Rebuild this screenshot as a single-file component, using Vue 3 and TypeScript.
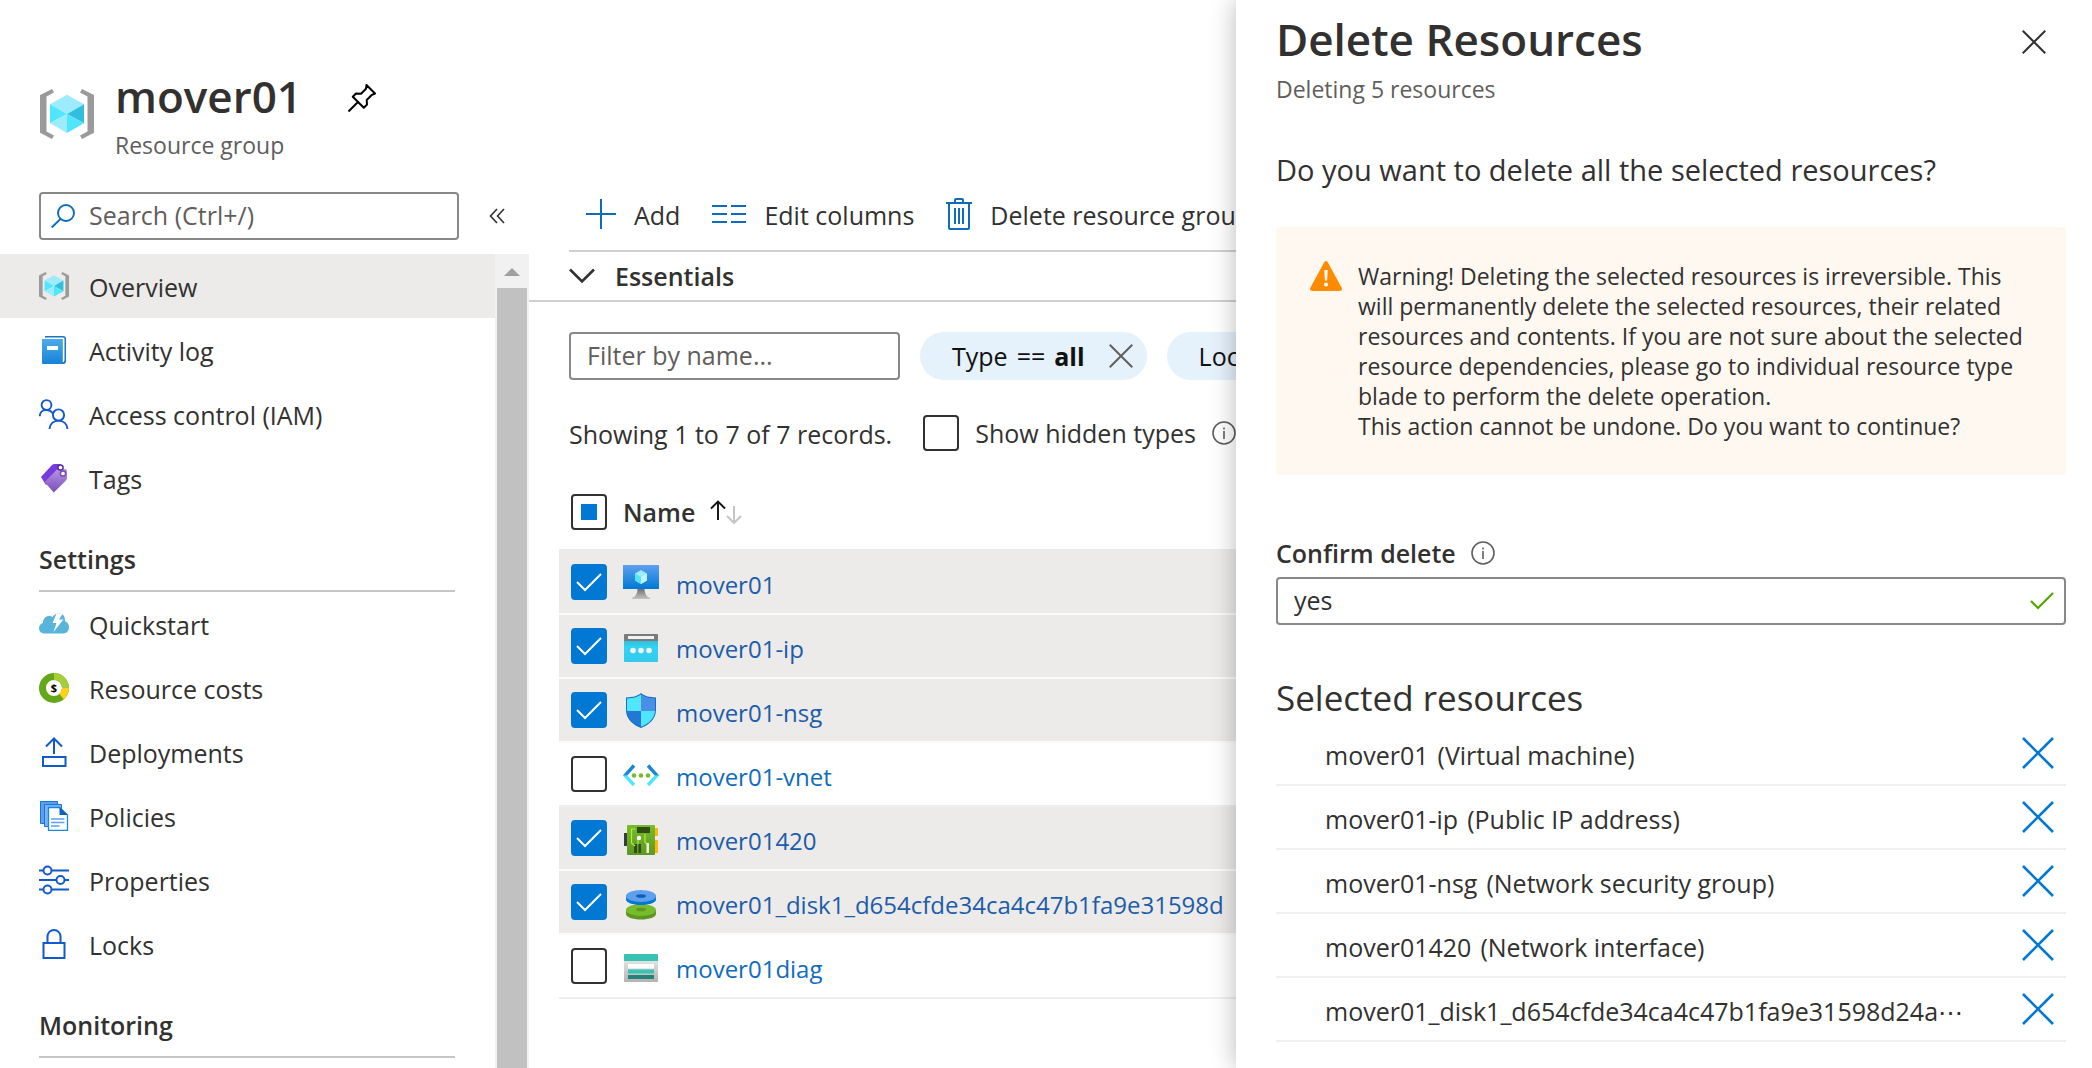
<script setup lang="ts">
import { computed, ref } from 'vue'

interface MenuItem {
  label: string
  icon: string
}

interface MenuGroup {
  title?: string
  items: MenuItem[]
}

interface Resource {
  name: string
  icon: string
  kind: string
  shortName?: string
  checked: boolean
}

const groups: MenuGroup[] = [
  {
    items: [
      { label: 'Overview', icon: 'group' },
      { label: 'Activity log', icon: 'log' },
      { label: 'Access control (IAM)', icon: 'people' },
      { label: 'Tags', icon: 'tags' },
    ],
  },
  {
    title: 'Settings',
    items: [
      { label: 'Quickstart', icon: 'quickstart' },
      { label: 'Resource costs', icon: 'costs' },
      { label: 'Deployments', icon: 'deploy' },
      { label: 'Policies', icon: 'policies' },
      { label: 'Properties', icon: 'properties' },
      { label: 'Locks', icon: 'lock' },
    ],
  },
  { title: 'Monitoring', items: [] },
]

const active = ref('Overview')
const search = ref('')
const filter = ref('')
const showHidden = ref(false)
const confirmation = ref('yes')

const resources = ref<Resource[]>([
  { name: 'mover01', icon: 'vm', kind: '(Virtual machine)', checked: true },
  { name: 'mover01-ip', icon: 'ip', kind: '(Public IP address)', checked: true },
  { name: 'mover01-nsg', icon: 'nsg', kind: '(Network security group)', checked: true },
  { name: 'mover01-vnet', icon: 'vnet', kind: '(Virtual network)', checked: false },
  { name: 'mover01420', icon: 'nic', kind: '(Network interface)', checked: true },
  {
    name: 'mover01_disk1_d654cfde34ca4c47b1fa9e31598d',
    shortName: 'mover01_disk1_d654cfde34ca4c47b1fa9e31598d24a⋯',
    icon: 'disk',
    kind: '',
    checked: true,
  },
  { name: 'mover01diag', icon: 'storage', kind: '(Storage account)', checked: false },
])

const selected = computed(() => resources.value.filter((r) => r.checked))
const allChecked = computed(() => selected.value.length === resources.value.length)
const someChecked = computed(() => selected.value.length > 0 && !allChecked.value)

function toggleAll() {
  const next = !allChecked.value
  resources.value.forEach((r) => (r.checked = next))
}
</script>

<template>
  <svg class="sprite" aria-hidden="true">
    <defs>
      <linearGradient id="g-blue" x1="0" y1="0" x2="0" y2="1">
        <stop offset="0" stop-color="#5ea0ef" />
        <stop offset="1" stop-color="#0078d4" />
      </linearGradient>
      <linearGradient id="g-book" x1="0" y1="0" x2="0" y2="1">
        <stop offset="0" stop-color="#4eaaea" />
        <stop offset="1" stop-color="#1683d8" />
      </linearGradient>
      <linearGradient id="g-tag" x1="0" y1="0" x2="0" y2="1">
        <stop offset="0" stop-color="#b796e6" />
        <stop offset="1" stop-color="#7a4cba" />
      </linearGradient>
      <linearGradient id="g-stand" x1="0" y1="0" x2="0" y2="1">
        <stop offset="0" stop-color="#707070" />
        <stop offset="1" stop-color="#c4c4c4" />
      </linearGradient>
      <linearGradient id="g-cyan" x1="0" y1="0" x2="0" y2="1">
        <stop offset="0" stop-color="#32bedd" />
        <stop offset="0.3" stop-color="#32d4f5" />
        <stop offset="1" stop-color="#35c9ea" />
      </linearGradient>
      <linearGradient id="g-angle" x1="0" y1="0" x2="0" y2="1">
        <stop offset="0.45" stop-color="#1988d9" />
        <stop offset="0.55" stop-color="#50e6ff" />
      </linearGradient>
      <linearGradient id="g-board" x1="0" y1="0" x2="0" y2="1">
        <stop offset="0" stop-color="#76bc2d" />
        <stop offset="1" stop-color="#5e9624" />
      </linearGradient>
      <linearGradient id="g-frame" x1="0" y1="0" x2="0" y2="1">
        <stop offset="0" stop-color="#e4e4e4" />
        <stop offset="1" stop-color="#b3b3b3" />
      </linearGradient>
    </defs>

    <symbol id="i-group" viewBox="0 0 54 50">
      <path fill="#9a9a9a" d="M0 6 12 0l2 3.500L6.500 7.500v35l7.500 4L12 50 0 43.700zM54 6 42 0l-2 3.500 7.500 4v35l-7.500 4L42 50l12-6.300z" />
      <path fill="#9cebff" d="M27 5.700 44 15.300 27 25 10 15.300z" />
      <path fill="#50e6ff" d="M10 15.300 27 25 10 34.300z" />
      <path fill="#9cebff" d="M10 34.300 27 25v19z" />
      <path fill="#32bedd" d="M44 15.300v19L27 25z" />
      <path fill="#50e6ff" d="M27 25l17 9.300L27 44z" />
    </symbol>
    <symbol id="i-log" viewBox="0 0 30 30">
      <path fill="#1b76b8" d="M6 1h18q3 0 3 3v22q0 3-3 3H6z" />
      <path fill="#fff" d="M7 2.500h17q1.500 0 1.500 1.500v21q0 2-2 2.500V4H5q.5-1.500 2-1.500z" />
      <path fill="url(#g-book)" d="M3 4h20.500v23q0 2-2 2H4q-1 0-1-1z" />
      <path fill="#fff" d="M8 11h11v4H8z" />
    </symbol>
    <symbol id="i-people" viewBox="0 0 30 30">
      <g fill="none" stroke="#1259c9" stroke-width="1.900">
        <circle cx="7.500" cy="6" r="4.900" />
        <circle cx="19.500" cy="16" r="5.600" />
        <path d="M.8 17.200C.8 13.500 3.500 11 7 11c2.800 0 5.200 1 7 3.700M10.500 30c.3-5 4-8.400 9-8.400s8.700 3.400 9 8.400" />
      </g>
    </symbol>
    <symbol id="i-tags" viewBox="0 0 30 30">
      <path fill="#773adc" d="M2 14 13 2q1-1 3-1h5l3 3-17 18z" />
      <path fill="url(#g-tag)" d="M5.500 19 17 7.500Q18.500 6 20 6h6q2 0 2 2v7q0 1.500-1.500 3L14.800 29.500z" />
      <circle cx="21.500" cy="4.500" r="2.600" fill="#fff" stroke="#552f99" stroke-width="1.500" />
      <circle cx="24" cy="10.500" r="2.600" fill="#fff" stroke="#7a4cba" stroke-width="1.500" />
    </symbol>
    <symbol id="i-quickstart" viewBox="0 0 30 30">
      <path fill="#59b4d9" d="M5.500 24.500C2 24.500 0 22 0 19.200c0-3 2-5 4-5.300C4 9.500 7 7 10 7c1.500 0 2.500.3 3.500 1C15 5.500 17.500 4.300 20 4.300c4 0 6.300 3 6 8 2.500.7 4 3.200 4 6 0 3.500-2.500 6.200-5.500 6.200z" />
      <path fill="#fff" d="M17.500 4.500 13.500 14h4l-3 9L24.500 10.500h-4.500L24 4z" />
    </symbol>
    <symbol id="i-deploy" viewBox="0 0 30 30">
      <path fill="none" stroke="#1259c9" stroke-width="2" d="M15 17V2M7 9.500 15 1.500l8 8M4 20h22.500v9H4z" />
    </symbol>
    <symbol id="i-policies" viewBox="0 0 30 30">
      <path fill="#5ea0ef" stroke="#1a76d4" d="M1.500.5h17v22h-17z" />
      <path fill="#7db4f3" stroke="#1a76d4" d="M5.500 3.500h17v22h-17z" />
      <path fill="#fff" stroke="#1a86e0" stroke-width="1.300" d="M9.500 6.500h11l8 7.500v15.400h-19z" />
      <path fill="#0b63b8" d="M20.500 6v8h8.200z" />
      <path stroke="#5ea0ef" stroke-width="1.600" d="M12 18h13.500M12 21.500h13.500M12 25h8.500" />
    </symbol>
    <symbol id="i-properties" viewBox="0 0 30 30">
      <g fill="none" stroke="#1259c9" stroke-width="1.900">
        <path d="M0 5.500h4.500M12.500 5.500H30M0 15h17.500M25.500 15H30M0 24.500h4.500M12.500 24.500H30" />
        <circle cx="8.500" cy="5.500" r="4" />
        <circle cx="21.500" cy="15" r="4" />
        <circle cx="8.500" cy="24.500" r="4" />
      </g>
    </symbol>
    <symbol id="i-lock" viewBox="0 0 30 30">
      <path fill="none" stroke="#1259c9" stroke-width="2" d="M4.500 14h21v15h-21zM8.500 14V7.500a6.500 6.500 0 0 1 13 0V14" />
    </symbol>

    <symbol id="i-vm" viewBox="0 0 36 36">
      <path fill="url(#g-blue)" d="M0 1h36v24H0z" />
      <path fill="url(#g-stand)" d="M14.500 25h7q0 7 5.500 9v1H9v-1q5.500-2 5.500-9z" />
      <path fill="#9cebff" d="m18 6 6 3.500v7L18 20l-6-3.500v-7z" />
      <path fill="#50e6ff" d="m12 9.500 6 3.500V20l-6-3.500z" />
      <path fill="#c3f1ff" d="m18 13 6-3.500v7L18 20z" />
    </symbol>
    <symbol id="i-ip" viewBox="0 0 36 36">
      <path fill="url(#g-cyan)" d="M1 13h34v20q0 1-1 1H2q-1 0-1-1z" />
      <path fill="#7b7b7b" d="M2 6h32q1 0 1 1v6H1V7q0-1 1-1z" />
      <path fill="#f2f2f2" d="M5 8h26v3H5z" />
      <g fill="#f2f2f2"><circle cx="10" cy="22.500" r="2.800" /><circle cx="18" cy="22.500" r="2.800" /><circle cx="26" cy="22.500" r="2.800" /></g>
    </symbol>
    <symbol id="i-nsg" viewBox="0 0 36 36">
      <path fill="#1570c4" d="M18 1c4 3.500 8 4 15 4.500V18c0 9-7 15-15 18C10 33 3 27 3 18V5.500C10 5 14 4.500 18 1z" />
      <path fill="#50e6ff" d="M18 2.500V19H4V6.500C11 6 14.500 5 18 2.500zM18 19h14c-.5 8-7 13-14 15.800z" />
      <path fill="#4a8fe6" d="M18 2.500C21.500 5 25 6 32 6.500V19H18z" />
      <path fill="#2278d2" d="M18 19v15.800C11 32 4.500 27 4 19z" />
    </symbol>
    <symbol id="i-vnet" viewBox="0 0 36 36">
      <path fill="none" stroke="url(#g-angle)" stroke-width="3.400" d="M11 9.500 2 19.500l9 9.500M25 9.500l9 10-9 9.500" />
      <g fill="#76bc2d"><circle cx="11" cy="19.500" r="2.300" /><circle cx="18" cy="19.500" r="2.300" /><circle cx="25" cy="19.500" r="2.300" /></g>
    </symbol>
    <symbol id="i-nic" viewBox="0 0 36 36">
      <path fill="#3b3b3b" d="M1 13h4v13H1z" />
      <path fill="#ffb900" d="M31 8h4v8h-4zM31 20h4v13h-4z" />
      <path fill="url(#g-board)" d="M5 5h26q1 0 1 1v28q0 1-1 1H5q-1 0-1-1V6q0-1 1-1z" />
      <path fill="#2f4f12" d="M14 7h13v6H14zM11 24h3v9h-3zM15.500 24h2.500v9h-2.500z" />
      <path fill="none" stroke="#b4ec36" stroke-width="1.200" d="M12 9H8.500v14L12 26M15 19v5M22 14v8l3 3v8" />
      <circle cx="16" cy="18" r="2.200" fill="#fff" />
      <path fill="#e8f7d4" d="M23.500 23h2.500v10h-2.500z" />
    </symbol>
    <symbol id="i-disk" viewBox="0 0 36 36">
      <path fill="#5e9624" d="M3 26v4c0 3 6.500 5.500 15 5.500S33 33 33 30v-4z" />
      <ellipse cx="18" cy="26" rx="15" ry="6" fill="#76bc2d" />
      <ellipse cx="18" cy="25.500" rx="5" ry="1.800" fill="#5e9624" />
      <path fill="#0078d4" d="M3 11.500v4c0 3 6.500 5.500 15 5.500s15-2.500 15-5.500v-4z" />
      <ellipse cx="18" cy="12" rx="15" ry="6" fill="#5ea0ef" />
      <ellipse cx="18" cy="12" rx="5" ry="1.800" fill="#0f5fae" />
    </symbol>
    <symbol id="i-storage" viewBox="0 0 36 36">
      <path fill="url(#g-frame)" d="M1 12h34v21q0 1-1 1H2q-1 0-1-1z" />
      <path fill="#37c2b1" d="M2 6h32q1 0 1 1v6H1V7q0-1 1-1z" />
      <path fill="#fff" d="M5 16h26v4.500H5z" />
      <path fill="#37c2b1" d="M5 21.500h26v4H5z" />
      <path fill="#258277" d="M5 27h26v4H5z" />
    </symbol>
    <symbol id="i-info" viewBox="0 0 24 24">
      <circle cx="12" cy="12" r="11" fill="none" stroke="#605e5c" stroke-width="1.600" />
      <path stroke="#605e5c" stroke-width="1.600" d="M12 10v8M12 6.500v2" />
    </symbol>
    <symbol id="i-close" viewBox="0 0 32 32">
      <path fill="none" stroke="currentColor" stroke-width="2.600" d="m1 1 30 30M31 1 1 31" />
    </symbol>
  </svg>

  <div class="page">
    <aside class="sidebar">
      <header class="blade-head">
        <svg class="blade-icon"><use href="#i-group" /></svg>
        <div>
          <h1>mover01</h1>
          <p class="subtitle">Resource group</p>
        </div>
        <button class="pin" type="button" aria-label="Pin">
          <svg viewBox="0 0 28 28" width="28" height="28">
            <path fill="none" stroke="#000" stroke-width="2" stroke-linejoin="round" d="M18.500 1 27 9.500l-3 1.300-5.300 5.200.3 4.500-3.200 3.300-11-11L8 9.500l5 .3 5-5zM10 18l-9.500 9.500" />
          </svg>
        </button>
      </header>

      <div class="search-row">
        <label class="search">
          <svg viewBox="0 0 24 24" width="24" height="24" aria-hidden="true">
            <path fill="none" stroke="#0f6cbd" stroke-width="1.900" d="M10 14.500.7 23.500" />
            <circle cx="15" cy="9" r="8" fill="none" stroke="#0f6cbd" stroke-width="1.900" />
          </svg>
          <input v-model="search" type="text" placeholder="Search (Ctrl+/)" aria-label="Search" />
        </label>
        <button class="collapse" type="button" aria-label="Collapse menu">
          <svg viewBox="0 0 16 16" width="16" height="16">
            <path fill="none" stroke="#323130" stroke-width="1.600" d="M8 1 1.500 8 8 15M15 1 8.500 8l6.500 7" />
          </svg>
        </button>
      </div>

      <div class="menu-area">
        <nav class="menu">
          <section v-for="group in groups" :key="group.title ?? 'general'">
            <h2 v-if="group.title">{{ group.title }}</h2>
            <a
              v-for="item in group.items"
              :key="item.label"
              href="#"
              class="menu-item"
              :class="{ active: item.label === active }"
              @click.prevent="active = item.label"
            >
              <svg v-if="item.icon === 'costs'" class="menu-icon" viewBox="0 0 30 30" aria-hidden="true">
                <circle cx="15" cy="15" r="11.500" fill="none" stroke="#64a819" stroke-width="7" />
                <path fill="none" stroke="#a5ce39" stroke-width="7" d="M15 3.500A11.500 11.500 0 0 1 26.500 15" />
                <path fill="none" stroke="#fdd116" stroke-width="7" d="M26.500 15A11.500 11.500 0 0 1 22.500 23.500" />
                <text x="15" y="19" class="dollar">$</text>
              </svg>
              <svg v-else class="menu-icon" aria-hidden="true"><use :href="'#i-' + item.icon" /></svg>
              <span>{{ item.label }}</span>
            </a>
          </section>
        </nav>
        <div class="scrollbar" aria-hidden="true">
          <svg viewBox="0 0 16 8" width="16" height="8"><path fill="#a0a0a0" d="M8 0l8 8H0z" /></svg>
          <div class="thumb"></div>
        </div>
      </div>
    </aside>

    <main class="content">
      <div class="toolbar">
        <button type="button">
          <svg viewBox="0 0 30 30" width="30" height="30"><path stroke="#0f6cbd" stroke-width="2" d="M15 0v30M0 15h30" /></svg>
          <span>Add</span>
        </button>
        <button type="button">
          <svg viewBox="0 0 34 20" width="34" height="20">
            <path stroke="#0f6cbd" stroke-width="2" d="M0 2h15M19 2h15M0 10h15M19 10h15M0 18h15M19 18h15" />
          </svg>
          <span>Edit columns</span>
        </button>
        <button type="button">
          <svg viewBox="0 0 26 32" width="26" height="32">
            <path fill="none" stroke="#0f6cbd" stroke-width="2" d="M0 5h26M3 5v25q0 1 1 1h18q1 0 1-1V5M9 5V2q0-1 1-1h6q1 0 1 1v3M9 10v16M13 10v16M17 10v16" />
          </svg>
          <span>Delete resource group</span>
        </button>
      </div>

      <button class="essentials" type="button">
        <svg viewBox="0 0 26 16" width="26" height="16"><path fill="none" stroke="#323130" stroke-width="2.600" d="m1 1.500 12 12 12-12" /></svg>
        <span>Essentials</span>
      </button>

      <div class="filters">
        <input v-model="filter" class="filter" type="text" placeholder="Filter by name..." aria-label="Filter by name" />
        <span class="pill">
          <span class="rule"><span>Type</span><span>==</span><b>all</b></span>
          <button type="button" aria-label="Remove filter"><svg class="x-small"><use href="#i-close" /></svg></button>
        </span>
        <span class="pill">
          <span class="rule"><span>Location</span><span>==</span><b>all</b></span>
        </span>
      </div>

      <div class="records">
        <span class="count">Showing 1 to 7 of 7 records.</span>
        <label class="hidden-types">
          <span class="box"><input v-model="showHidden" type="checkbox" /></span>
          <span>Show hidden types</span>
        </label>
        <svg class="info"><use href="#i-info" /></svg>
      </div>

      <table>
        <colgroup>
          <col class="col-check" />
          <col class="col-kind" />
          <col />
        </colgroup>
        <thead>
          <tr>
            <th class="check">
              <span class="box">
                <input type="checkbox" aria-label="Select all" :checked="allChecked" :indeterminate="someChecked" @change="toggleAll" />
              </span>
            </th>
            <th colspan="2">
              <span class="sort">
                <span>Name</span>
                <svg viewBox="0 0 34 24" width="34" height="24" aria-hidden="true">
                  <path fill="none" stroke="#111" stroke-width="1.900" d="M9 20V1.500M2 8.500l7-7 7 7" />
                  <path fill="none" stroke="#c4c4c4" stroke-width="1.900" d="M25 6v17M18 16l7 7 7-7" />
                </svg>
              </span>
            </th>
          </tr>
        </thead>
        <tbody>
          <tr v-for="r in resources" :key="r.name" :class="{ picked: r.checked }">
            <td class="check">
              <span class="box">
                <input v-model="r.checked" type="checkbox" :aria-label="r.name" />
                <svg v-if="r.checked" viewBox="0 0 36 36" width="36" height="36" aria-hidden="true">
                  <path fill="none" stroke="#fff" stroke-width="2" d="m6 18 8 8 16-16" />
                </svg>
              </span>
            </td>
            <td><svg class="res-icon" aria-hidden="true"><use :href="'#i-' + r.icon" /></svg></td>
            <td class="name"><a href="#" @click.prevent>{{ r.name }}</a></td>
          </tr>
        </tbody>
      </table>
    </main>

    <section class="panel" aria-label="Delete Resources">
      <header class="panel-head">
        <h1>Delete Resources</h1>
        <button type="button" class="close" aria-label="Close"><svg class="x-small"><use href="#i-close" /></svg></button>
      </header>
      <p class="subtitle">Deleting {{ selected.length }} resources</p>
      <p class="question">Do you want to delete all the selected resources?</p>

      <div class="warning">
        <svg viewBox="0 0 32 30" width="32" height="30" aria-hidden="true">
          <path fill="#ff8c00" d="M14.200 1.200q1.800-2.400 3.600 0l14 25.800q.8 2.600-1.800 3H2q-2.600-.4-1.800-3z" />
          <path fill="#fff" d="M14.300 9h3.400l-.6 10.500h-2.200z" />
          <circle cx="16" cy="23.500" r="2" fill="#fff" />
        </svg>
        <p>
          Warning! Deleting the selected resources is irreversible. This will permanently delete the selected
          resources, their related resources and contents. If you are not sure about the selected resource
          dependencies, please go to individual resource type blade to perform the delete operation.<br />
          This action cannot be undone. Do you want to continue?
        </p>
      </div>

      <div class="confirm-label">
        <label for="confirm">Confirm delete</label>
        <svg class="info"><use href="#i-info" /></svg>
      </div>
      <div class="confirm">
        <input id="confirm" v-model="confirmation" type="text" />
        <svg viewBox="0 0 24 18" width="24" height="18" aria-hidden="true">
          <path fill="none" stroke="#57a300" stroke-width="2.200" d="m1 9 7 7L23 1" />
        </svg>
      </div>

      <h2>Selected resources</h2>
      <ul>
        <li v-for="r in selected" :key="r.name">
          <span>{{ r.shortName ?? r.name }}</span>
          <span v-if="r.kind">{{ r.kind }}</span>
          <button type="button" :aria-label="'Remove ' + r.name" @click="r.checked = false">
            <svg class="x-large"><use href="#i-close" /></svg>
          </button>
        </li>
      </ul>
    </section>
  </div>
</template>

<style>
body {
  background: #fff;
}
</style>

<style scoped>
.page,
.page button,
.page input {
  font-family: "Open Sans", "Noto Sans", sans-serif;
  font-size: 25px;
  color: #323130;
}

.page {
  display: flex;
  min-height: 100vh;
  line-height: 32px;
  white-space: nowrap;
}

.page * {
  box-sizing: border-box;
}

h1,
h2,
p,
ul {
  margin: 0;
  padding: 0;
}

h1 {
  font-size: 44px;
  line-height: 60px;
  font-weight: 600;
}

button {
  padding: 0;
  border: 0;
  background: none;
  cursor: pointer;
}

svg {
  display: block;
  flex: none;
}

.sprite {
  position: absolute;
  width: 0;
  height: 0;
}

.dollar {
  font: bold 11px "Open Sans", sans-serif;
  text-anchor: middle;
}

.subtitle {
  font-size: 23px;
  color: #605e5c;
}

.info {
  width: 24px;
  height: 24px;
}

.x-small {
  width: 24px;
  height: 24px;
}

.x-large {
  width: 32px;
  height: 32px;
  color: #0078d4;
}

/* Left blade */
.sidebar {
  display: flex;
  flex-direction: column;
  flex: 0 0 529px;
}

.blade-head {
  display: flex;
  align-items: flex-start;
  height: 192px;
  padding: 66px 0 0 40px;
}

.blade-icon {
  width: 54px;
  height: 50px;
  margin: 23px 21px 0 0;
}

.blade-head .subtitle {
  margin-top: 3px;
}

.pin {
  margin: 18px 0 0 46px;
}

.search-row {
  display: flex;
  align-items: center;
  gap: 30px;
  padding: 0 24px 14px 39px;
}

.search {
  display: flex;
  align-items: center;
  flex: 1;
  gap: 14px;
  height: 48px;
  padding: 0 10px;
  border: 2px solid #8a8886;
  border-radius: 4px;
}

.search input {
  flex: 1;
  min-width: 0;
  padding: 0 0 2px;
  border: 0;
  outline: 0;
}

input::placeholder {
  color: #605e5c;
  opacity: 1;
}

.menu-area {
  display: flex;
  flex: 1;
}

.menu {
  flex: 1;
}

.menu-item {
  display: flex;
  align-items: center;
  gap: 20px;
  height: 64px;
  padding-left: 39px;
  color: inherit;
  text-decoration: none;
}

.menu-item span {
  padding-top: 2px;
}

.menu-item.active {
  background: #edebe9;
}

.menu-icon {
  width: 30px;
  height: 30px;
}

.menu h2 {
  margin: 0 40px 0 39px;
  padding: 33px 0 15px;
  border-bottom: 2px solid #c8c6c4;
  font-size: 25px;
  font-weight: 600;
}

.scrollbar {
  display: flex;
  flex-direction: column;
  align-items: center;
  width: 34px;
  padding-top: 14px;
  background: #f1f1f1;
}

.thumb {
  flex: 1;
  width: 30px;
  margin-top: 12px;
  background: #c1c1c1;
}

/* Resource list */
.content {
  flex: 1;
  min-width: 0;
  padding-top: 180px;
  overflow: hidden;
}

.toolbar {
  display: flex;
  align-items: center;
  gap: 32px;
  height: 72px;
  margin-left: 40px;
  padding: 0 0 2px 17px;
  border-bottom: 2px solid #d2d0ce;
}

.toolbar button {
  display: flex;
  align-items: center;
  gap: 18px;
}

.toolbar span {
  padding-top: 2px;
}

.essentials {
  display: flex;
  align-items: center;
  gap: 20px;
  width: 100%;
  height: 50px;
  padding-left: 40px;
  border-bottom: 2px solid #d2d0ce;
  font-weight: 600;
}

.filters {
  display: flex;
  gap: 20px;
  padding: 30px 0 0 40px;
}

.filter {
  flex: none;
  width: 331px;
  height: 48px;
  padding: 0 16px 2px;
  border: 2px solid #8a8886;
  border-radius: 4px;
}

.pill {
  display: flex;
  align-items: center;
  gap: 24px;
  height: 48px;
  padding: 0 14px 0 32px;
  border-radius: 24px;
  background: #e5f1fb;
  color: #111;
}

.rule {
  display: flex;
  gap: 9px;
}

.pill .x-small {
  color: #605e5c;
}

.records {
  display: flex;
  align-items: center;
  padding: 35px 0 0 40px;
}

.count {
  margin-right: 31px;
  padding-top: 2px;
}

.hidden-types {
  display: flex;
  align-items: center;
  gap: 16px;
  margin-right: 16px;
}

.box {
  display: grid;
  width: 36px;
  height: 36px;
}

.box > * {
  grid-area: 1 / 1;
  pointer-events: none;
}

.box input {
  appearance: none;
  width: 36px;
  height: 36px;
  margin: 0;
  border: 2px solid #323130;
  border-radius: 4px;
  background: #fff;
  pointer-events: auto;
}

.box input:checked {
  border-color: #0078d4;
  background: #0078d4;
}

.box input:indeterminate {
  padding: 8px;
  background: #0078d4 content-box;
}

table {
  width: calc(100% - 30px);
  margin: 28px 0 0 30px;
  border-spacing: 0;
  table-layout: fixed;
}

.col-check {
  width: 64px;
}

.col-kind {
  width: 53px;
}

th,
td {
  height: 64px;
  padding: 0;
  border-bottom: 2px solid #f0efee;
  text-align: left;
  vertical-align: middle;
}

th {
  height: 72px;
  padding-bottom: 4px;
  border-color: #edebe9;
  font-weight: 600;
}

th.check,
td.check {
  padding-left: 12px;
}

.picked td {
  border-color: #fbfbfb;
  background: #edebe9 padding-box;
}

.res-icon {
  width: 36px;
  height: 36px;
}

.sort {
  display: flex;
  align-items: center;
  gap: 14px;
}

td.name {
  padding-top: 6px;
  font-size: 24px;
}

.name a {
  color: #0f6cbd;
  text-decoration: none;
}

.picked .name a {
  color: #1c5ca8;
}

/* Delete panel */
.panel {
  position: relative;
  flex: none;
  width: 41%;
  max-width: 856px;
  padding: 9px 26px 0 40px;
  background: #fff;
  box-shadow: 0 0 24px rgba(0, 0, 0, 0.28);
}

.panel-head {
  display: flex;
  align-items: center;
  justify-content: space-between;
  padding-right: 20px;
}

.close {
  margin-top: 6px;
}

.panel .subtitle {
  margin-top: 4px;
}

.question {
  margin-top: 45px;
  font-size: 29px;
  line-height: 40px;
}

.warning {
  display: flex;
  align-items: flex-start;
  gap: 16px;
  margin-top: 37px;
  padding: 34px 38px 34px 34px;
  border-radius: 4px;
  background: #fff8f0;
}

.warning p {
  font-size: 23px;
  line-height: 30px;
  white-space: normal;
}

.confirm-label {
  display: flex;
  align-items: center;
  gap: 15px;
  margin-top: 62px;
  font-weight: 600;
}

.confirm {
  display: flex;
  align-items: center;
  height: 48px;
  margin-top: 8px;
  padding: 0 10px 0 16px;
  border: 2px solid #8a8886;
  border-radius: 4px;
}

.confirm input {
  flex: 1;
  min-width: 0;
  padding: 0 0 2px;
  border: 0;
  outline: 0;
}

.panel h2 {
  margin-top: 49px;
  font-size: 35px;
  line-height: 48px;
  font-weight: 400;
}

ul {
  list-style: none;
}

li {
  display: flex;
  align-items: center;
  gap: 9px;
  height: 64px;
  padding: 0 12px 0 49px;
  border-bottom: 2px solid #f0efee;
}

li span {
  padding-top: 4px;
}

li button {
  margin-left: auto;
}
</style>
